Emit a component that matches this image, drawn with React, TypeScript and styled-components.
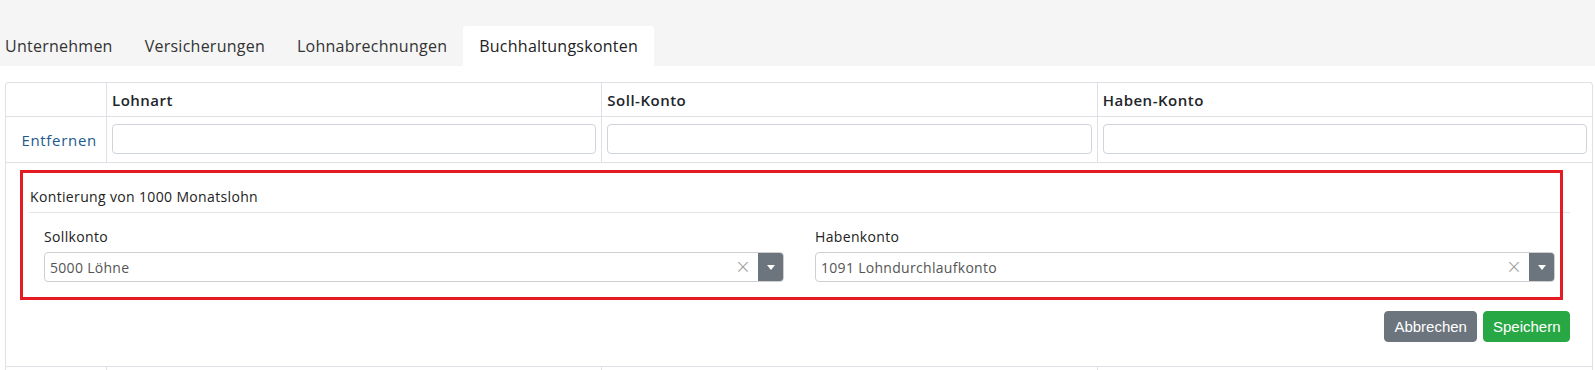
import React from "react";
import styled, { createGlobalStyle } from "styled-components";

const GlobalStyle = createGlobalStyle`
  html, body { margin: 0; padding: 0; background: #fff; }
  body {
    font-family: "Open Sans", "Noto Sans", Arial, sans-serif;
    color: #212529;
  }
  * { box-sizing: border-box; }
`;

const TabBar = styled.nav`
  display: flex;
  align-items: flex-end;
  height: 66px;
  padding-left: 5px;
  background: #f5f5f5;
`;

const Tab = styled.div<{ $active?: boolean }>`
  display: flex;
  align-items: center;
  height: 40px;
  padding: 0 16px;
  font-size: 16px;
  letter-spacing: 0.25px;
  color: ${(p) => (p.$active ? "#222" : "#333")};
  background: ${(p) => (p.$active ? "#fff" : "transparent")};
  border-radius: 4px 4px 0 0;
  &:first-child { padding-left: 0; }
`;

const Content = styled.main`
  padding: 16px 2px 0 5px;
`;

const Table = styled.div`
  border: 1px solid #dee2e6;
  border-bottom: none;
  border-radius: 4px 4px 0 0;
`;

const Row = styled.div<{ $h: number }>`
  display: grid;
  grid-template-columns: 100px 1fr 1fr 1fr;
  height: ${(p) => p.$h}px;
  border-bottom: 1px solid #dee2e6;
`;

const Cell = styled.div<{ $align?: string }>`
  display: flex;
  align-items: center;
  justify-content: ${(p) => p.$align || "flex-start"};
  padding: 0 5px;
  & + & { border-left: 1px solid #dee2e6; }
`;

const HeadText = styled.span`
  font-size: 15px;
  font-weight: 600;
  letter-spacing: 0.5px;
  color: #212529;
`;

const LinkText = styled.a`
  font-size: 15px;
  letter-spacing: 0.7px;
  color: #1e5a8c;
  text-decoration: none;
  padding-right: 4px;
`;

const FilterInput = styled.input`
  width: 100%;
  height: 30px;
  border: 1px solid #ced4da;
  border-radius: 4px;
  background: #fff;
  margin-top: -2px;
`;

const DetailRow = styled.div`
  position: relative;
  padding: 17px 22px 24px 23px;
  border-bottom: 1px solid #dee2e6;
`;

const Highlight = styled.div`
  position: absolute;
  top: 7px;
  left: 14px;
  right: 29px;
  height: 130px;
  border: 3px solid #e41b23;
  pointer-events: none;
`;

const PanelHeader = styled.div`
  height: 33px;
  display: flex;
  align-items: center;
  padding-left: 1px;
  font-size: 14px;
  font-weight: 500;
  letter-spacing: 0.35px;
  color: #222;
  border-bottom: 1px solid #e2e2e2;
`;

const FieldGrid = styled.div`
  display: grid;
  grid-template-columns: 1fr 1fr;
  column-gap: 31px;
  padding: 14px 15px 0;
`;

const Field = styled.div`
  display: flex;
  flex-direction: column;
`;

const Label = styled.label`
  font-size: 14px;
  font-weight: 500;
  letter-spacing: 0.35px;
  line-height: 20px;
  margin-bottom: 5px;
  color: #222;
`;

const SelectBox = styled.div`
  display: flex;
  align-items: stretch;
  height: 30px;
  border: 1px solid #cfcfcf;
  border-radius: 4px;
  overflow: hidden;
  background: #fff;
`;

const SelectValue = styled.span`
  flex: 1;
  display: flex;
  align-items: center;
  padding-left: 5px;
  font-size: 14px;
  letter-spacing: 0.3px;
  color: #555;
`;

const ClearX = styled.span`
  display: flex;
  align-items: center;
  padding: 0 7px 2px;
  font-size: 19px;
  color: #9a9a9a;
  font-family: "DejaVu Sans", sans-serif;
  font-weight: 300;
`;

const DropButton = styled.span`
  width: 25px;
  background: #6c757d;
  display: flex;
  align-items: center;
  justify-content: center;
  &::after {
    content: "";
    border-left: 4px solid transparent;
    border-right: 4px solid transparent;
    border-top: 5px solid #fff;
    margin-top: 1px;
  }
`;

const Actions = styled.div`
  display: flex;
  justify-content: flex-end;
  gap: 6px;
  margin-top: 29px;
`;

const Button = styled.button<{ $variant: "secondary" | "success" }>`
  height: 31px;
  padding: 0 ${(p) => (p.$variant === "success" ? "8.5px" : "9.5px")};
  border: 1px solid ${(p) => (p.$variant === "success" ? "#28a745" : "#6c757d")};
  background: ${(p) => (p.$variant === "success" ? "#28a745" : "#6c757d")};
  color: #fff;
  font-family: "Liberation Sans", Arial, sans-serif;
  font-size: 15px;
  border-radius: 4px;
`;

function Select({ value }: { value: string }) {
  return (
    <SelectBox>
      <SelectValue>{value}</SelectValue>
      <ClearX>×</ClearX>
      <DropButton />
    </SelectBox>
  );
}

export default function App() {
  const tabs = ["Unternehmen", "Versicherungen", "Lohnabrechnungen", "Buchhaltungskonten"];
  return (
    <>
      <GlobalStyle />
      <TabBar>
        {tabs.map((t, i) => (
          <Tab key={t} $active={i === 3}>
            {t}
          </Tab>
        ))}
      </TabBar>
      <Content>
        <Table>
          <Row $h={34}>
            <Cell />
            <Cell>
              <HeadText>Lohnart</HeadText>
            </Cell>
            <Cell>
              <HeadText>Soll-Konto</HeadText>
            </Cell>
            <Cell>
              <HeadText>Haben-Konto</HeadText>
            </Cell>
          </Row>
          <Row $h={46}>
            <Cell $align="flex-end">
              <LinkText href="#">Entfernen</LinkText>
            </Cell>
            <Cell>
              <FilterInput />
            </Cell>
            <Cell>
              <FilterInput />
            </Cell>
            <Cell>
              <FilterInput />
            </Cell>
          </Row>
          <DetailRow>
            <PanelHeader>Kontierung von 1000 Monatslohn</PanelHeader>
            <FieldGrid>
              <Field>
                <Label>Sollkonto</Label>
                <Select value="5000 Löhne" />
              </Field>
              <Field>
                <Label>Habenkonto</Label>
                <Select value="1091 Lohndurchlaufkonto" />
              </Field>
            </FieldGrid>
            <Actions>
              <Button $variant="secondary">Abbrechen</Button>
              <Button $variant="success">Speichern</Button>
            </Actions>
            <Highlight />
          </DetailRow>
          <Row $h={20}>
            <Cell />
            <Cell />
            <Cell />
            <Cell />
          </Row>
        </Table>
      </Content>
    </>
  );
}
